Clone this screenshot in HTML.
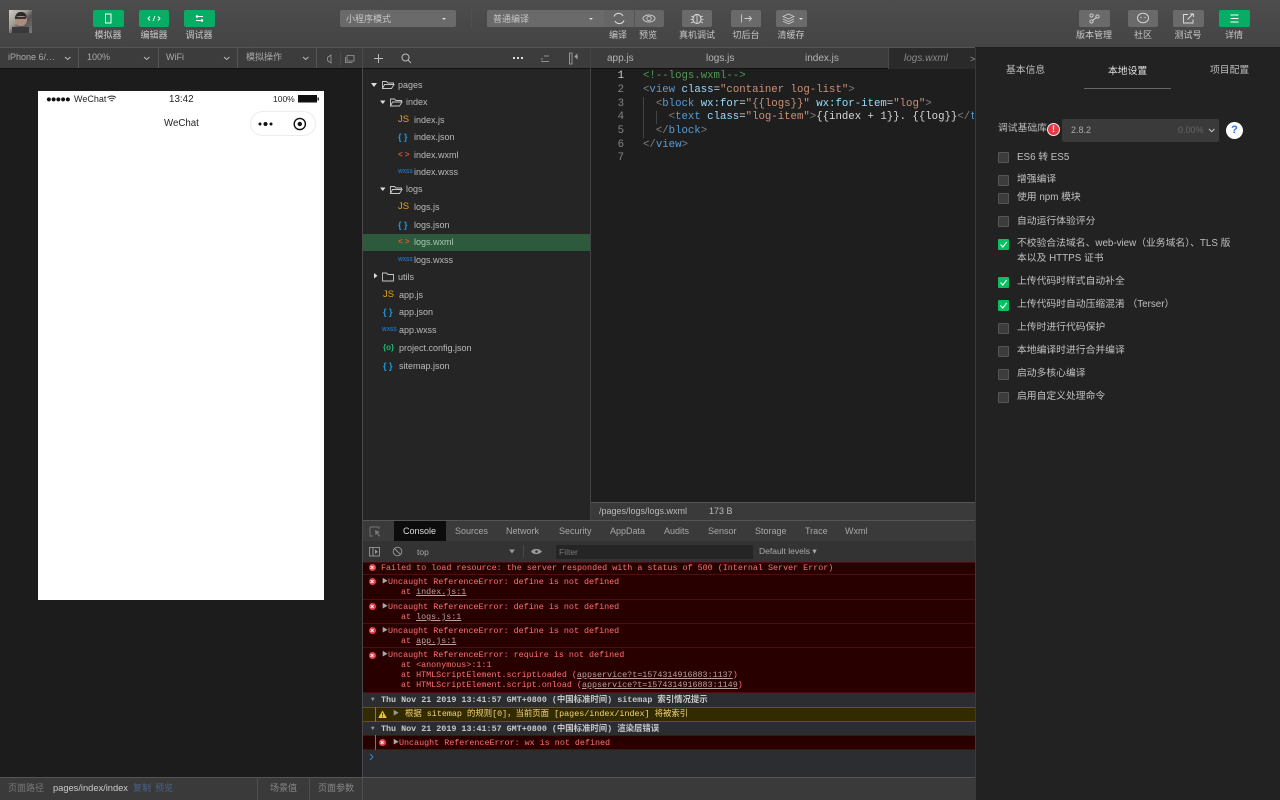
<!DOCTYPE html>
<html><head><meta charset="utf-8"><style>
*{box-sizing:border-box}
html,body{margin:0;padding:0;width:1280px;height:800px;overflow:hidden;background:#1e1e1e;font-family:"Liberation Sans","Noto Sans CJK SC",sans-serif;color:#ccc}
#w{position:absolute;left:0;top:0;width:1280px;height:800px;overflow:hidden;filter:blur(.35px)}
.a{position:absolute;white-space:nowrap}
.t{position:absolute;white-space:nowrap;line-height:14px;font-size:9px;color:#c0c0c0}
.btn{position:absolute;top:10px;height:17px;width:30px;background:#6a6a6a;border-radius:2px}
.g{background:#06ad64}
.lbl{position:absolute;top:29px;line-height:13px;font-size:9px;color:#c8c8c8;text-align:center;white-space:nowrap}
svg{position:absolute;overflow:visible}
.f{position:absolute;font-size:9px;line-height:14px;color:#bababa;white-space:nowrap}
.i{position:absolute;font-size:9.500px;line-height:14px;white-space:nowrap}
.m{position:absolute;font-family:"Liberation Mono","Noto Sans CJK SC",monospace;font-size:8.4px;line-height:10px;white-space:pre;color:#ff7070}
.m u{color:#b9a0a0}
.c{position:absolute;left:643px;font-family:"Liberation Mono",monospace;font-size:10.7px;line-height:14px;white-space:pre;color:#d8d8d8}
.n{position:absolute;left:612px;width:12px;text-align:right;font-family:"Liberation Mono",monospace;font-size:10.7px;line-height:14px;color:#858585}
.tg{color:#808080}.b{color:#569cd6}.s{color:#ce9178}.k{color:#9cdcfe}
.dt{position:absolute;font-size:9px;color:#a8a8a8;line-height:14px;top:524px;white-space:nowrap}
.cb{position:absolute;left:998px;width:11px;height:11px;background:#3c3c3c;border:1px solid #555;border-radius:1px}
.cb.on{background:#07c160;border-color:#07c160}
.l{position:absolute;left:1017px;font-size:9.800px;line-height:15px;color:#c0c0c0;white-space:nowrap}
.e{position:absolute;width:7px;height:7px;border-radius:50%;background:#e8404a}
.e:after,.e:before{content:"";position:absolute;left:1.300px;top:3px;width:4.400px;height:1px;background:#fff;transform:rotate(45deg)}
.e:before{transform:rotate(-45deg)}
.ln{position:absolute;left:363px;width:612px;height:1px;background:#4a1010}
</style></head><body><div id="w">

<!-- top toolbar -->
<div class="a" style="left:0;top:0;width:1280px;height:47px;background:linear-gradient(#4d4d4d,#444)"></div>
<div class="a" style="left:0;top:47px;width:975px;height:1px;background:#555"></div>

<div class="a" style="left:9px;top:10px;width:23px;height:23px;background:linear-gradient(135deg,#d0ccc3 0%,#a09a95 40%,#55524f 60%,#7a7a84 100%)"></div>
<div class="a" style="left:15px;top:12px;width:12px;height:14px;border-radius:45%;background:#a98f80;border-top:4px solid #2a2a2a"></div>
<div class="a" style="left:15px;top:17px;width:11px;height:2px;background:#333"></div>
<div class="a" style="left:12px;top:27px;width:17px;height:6px;background:#3a383a"></div>

<div class="btn g" style="left:93px;width:31px"></div>
<svg style="left:93px;top:10px" width="31" height="17"><rect x="12.500" y="4" width="5.500" height="9" fill="none" stroke="#fff" stroke-width="1"/></svg>
<div class="lbl" style="left:88px;width:40px">模拟器</div>
<div class="btn g" style="left:139px;width:30px"></div>
<svg style="left:139px;top:10px" width="30" height="17"><path d="M11 6.500 9 8.500l2 2M19 6.500l2 2-2 2M16 6l-2 5" fill="none" stroke="#fff" stroke-width=".9"/></svg>
<div class="lbl" style="left:134px;width:40px">编辑器</div>
<div class="btn g" style="left:184px;width:31px"></div>
<svg style="left:184px;top:10px" width="31" height="17"><path d="M12 6.500h7M12 6.500l1.500-1.500M12 6.500 13.500 8M19 10.500h-7M19 10.500l-1.500-1.500M19 10.500 17.500 12" fill="none" stroke="#fff" stroke-width=".9"/></svg>
<div class="lbl" style="left:179px;width:40px">调试器</div>

<div class="a" style="left:340px;top:10px;width:116px;height:17px;background:#6a6a6a;border-radius:2px"></div>
<div class="t" style="left:346px;top:12px;color:#c8c8c8">小程序模式</div>
<div class="a" style="left:442px;top:18px;border:2px solid transparent;border-top:2px solid #ddd"></div>
<div class="a" style="left:471px;top:10px;width:1px;height:17px;background:#505050"></div>

<div class="a" style="left:487px;top:10px;width:117px;height:17px;background:#6a6a6a;border-radius:2px 0 0 2px"></div>
<div class="t" style="left:493px;top:12px;color:#c8c8c8">普通编译</div>
<div class="a" style="left:589px;top:18px;border:2px solid transparent;border-top:2px solid #ddd"></div>
<div class="a" style="left:604px;top:10px;width:30px;height:17px;background:#666"></div>
<svg style="left:604px;top:10px" width="30" height="17"><path d="M10 6.500A5 5 0 0 1 19 6M20 10.500A5 5 0 0 1 11 11" fill="none" stroke="#ddd" stroke-width="1"/></svg>
<div class="a" style="left:634px;top:10px;width:30px;height:17px;background:#666;border-left:1px solid #555;border-radius:0 2px 2px 0"></div>
<svg style="left:634px;top:10px" width="30" height="17"><ellipse cx="15" cy="8.500" rx="6" ry="3.500" fill="none" stroke="#ccc" stroke-width=".9"/><circle cx="15" cy="8.500" r="2.200" fill="none" stroke="#ccc" stroke-width=".9"/></svg>
<div class="lbl" style="left:604px;width:28px">编译</div>
<div class="lbl" style="left:634px;width:28px">预览</div>
<div class="btn" style="left:682px"></div>
<svg style="left:682px;top:10px" width="30" height="17"><ellipse cx="15" cy="9" rx="4" ry="4.500" fill="none" stroke="#ddd"/><path d="M13 4.500h4M9 6l3 1.500M21 6l-3 1.500M8.500 9.500H11M21.500 9.500H19M9 13l3-1.500M21 13l-3-1.500M15 5v8" fill="none" stroke="#ddd" stroke-width=".8"/></svg>
<div class="lbl" style="left:672px;width:50px">真机调试</div>
<div class="btn" style="left:731px"></div>
<svg style="left:731px;top:10px" width="30" height="17"><path d="M10.500 4.500v8M13.500 8.500h7M18 6l2.500 2.500L18 11" fill="none" stroke="#ccc" stroke-width=".9"/></svg>
<div class="lbl" style="left:726px;width:40px">切后台</div>
<div class="btn" style="left:776px;width:31px"></div>
<svg style="left:776px;top:10px" width="31" height="17"><path d="M7 6.500l5.500-2.500L18 6.500l-5.500 2.500zM7 9l5.500 2.500L18 9M7 11.300l5.500 2.500 5.500-2.500" fill="none" stroke="#ccc" stroke-width=".8"/><path d="M23 8h4l-2 2z" fill="#ddd"/></svg>
<div class="lbl" style="left:771px;width:40px">清缓存</div>

<div class="btn" style="left:1079px;width:31px"></div>
<svg style="left:1079px;top:10px" width="31" height="17"><circle cx="12.500" cy="5.500" r="1.600" fill="none" stroke="#ddd" stroke-width=".8"/><circle cx="12.500" cy="11.500" r="1.600" fill="none" stroke="#ddd" stroke-width=".8"/><circle cx="18.500" cy="6.500" r="1.600" fill="none" stroke="#ddd" stroke-width=".8"/><path d="M13.500 10.500 17.500 7.500" stroke="#ddd" stroke-width=".8"/></svg>
<div class="lbl" style="left:1070px;width:48px">版本管理</div>
<div class="btn" style="left:1128px;width:30px"></div>
<svg style="left:1128px;top:10px" width="30" height="17"><ellipse cx="15" cy="8" rx="5.500" ry="4.800" fill="none" stroke="#ddd" stroke-width=".9"/><circle cx="13" cy="7.500" r=".6" fill="#ddd"/><circle cx="17" cy="7.500" r=".6" fill="#ddd"/></svg>
<div class="lbl" style="left:1123px;width:40px">社区</div>
<div class="btn" style="left:1173px;width:31px"></div>
<svg style="left:1173px;top:10px" width="31" height="17"><path d="M15 4.500h-4.500v8.500h9.500V9.500M14.500 9.500 20 4M17 4h3.500v3" fill="none" stroke="#ddd" stroke-width=".9"/></svg>
<div class="lbl" style="left:1168px;width:40px">测试号</div>
<div class="btn g" style="left:1219px;width:31px"></div>
<svg style="left:1219px;top:10px" width="31" height="17"><path d="M11.500 5h8M11.500 8.500h8M11.500 12h8" stroke="#fff" stroke-width=".9"/></svg>
<div class="lbl" style="left:1214px;width:40px">详情</div>

<!-- second bar -->
<div class="a" style="left:0;top:48px;width:975px;height:20px;background:#3c3c3c"></div>
<div class="a" style="left:0;top:68px;width:975px;height:1px;background:#111"></div>
<div class="t" style="left:8px;top:50px;color:#aaa">iPhone 6/…</div>
<div class="t" style="left:87px;top:50px;color:#aaa">100%</div>
<div class="t" style="left:166px;top:50px;color:#aaa">WiFi</div>
<div class="t" style="left:246px;top:50px;color:#aaa">模拟操作</div>
<svg style="left:0;top:48px" width="362" height="20" fill="none" stroke="#bbb" stroke-width="1">
<path d="M65 9l2.700 2.500L70.400 9M144 9l2.700 2.500L149.400 9M224 9l2.700 2.500L229.400 9M303 9l2.700 2.500L308.400 9"/>
<path d="M78.500 0v20M158.500 0v20M237.500 0v20M316.500 0v20" stroke="#555"/>
<path d="M340.500 5v12" stroke="#4c4c4c"/>
<path d="M331 7l-3.500 2.500v3l3.500 2.500z" stroke="#999" stroke-width=".8"/>
<path d="M347 7.500h7v5.500h-7zM345.500 9v5.500h7" stroke="#999" stroke-width=".8"/>
</svg>
<div class="a" style="left:362px;top:48px;width:1px;height:730px;background:#4a4a4a"></div>

<!-- simulator -->
<div class="a" style="left:0;top:69px;width:362px;height:708px;background:#1c1c1c"></div>
<div class="a" style="left:38px;top:91px;width:286px;height:509px;background:#fff"></div>
<div class="a" style="left:46px;top:95.500px;color:#111;font-size:9.500px;line-height:8px;letter-spacing:-1px">●●●●●</div>
<div class="t" style="left:74px;top:92px;color:#222;font-size:9px">WeChat</div>
<svg style="left:107px;top:95px" width="10" height="8" fill="none" stroke="#222" stroke-width=".9"><path d="M.5 2.500c2.500-2 6-2 8.500 0M2 4.200c1.700-1.300 4-1.300 5.500 0M3.500 6c.8-.6 1.700-.6 2.500 0"/></svg>
<div class="t" style="left:169px;top:92px;color:#222;font-size:9.800px;line-height:15px">13:42</div>
<div class="t" style="left:273px;top:92px;color:#222;font-size:8.500px">100%</div>
<svg style="left:298px;top:95px" width="21" height="8"><rect x=".5" y=".5" width="18" height="6.500" fill="#111" stroke="#111"/><rect x="19.500" y="2.500" width="1.300" height="3" fill="#111"/></svg>
<div class="t" style="left:164px;top:116px;color:#222;font-size:9.700px;line-height:15px">WeChat</div>
<div class="a" style="left:250px;top:111px;width:66px;height:25px;border:1px solid #ececec;border-radius:13px"></div>
<svg style="left:258px;top:118px" width="60" height="12"><circle cx="2" cy="6" r="1.500" fill="#111"/><circle cx="7.500" cy="6" r="2" fill="#111"/><circle cx="13" cy="6" r="1.500" fill="#111"/><circle cx="41.800" cy="6" r="5.600" fill="none" stroke="#111" stroke-width="1.400"/><circle cx="41.800" cy="6" r="2.200" fill="#111"/></svg>

<!-- tree toolbar -->
<svg style="left:363px;top:48px" width="228" height="20" fill="none" stroke="#bbb" stroke-width="1">
<path d="M11 10.500h9M15.500 6v9"/><circle cx="42.500" cy="9.500" r="3.500"/><path d="M45 12l3 3"/>
<path d="M178 11h2M181 8h5M178 13.500h8" stroke="#aaa" stroke-width=".8"/>
<path d="M206.500 5v11h2.500V5zM212 8.500l3 0M212 8.500l2-2v4z" stroke="#aaa" stroke-width=".8"/>
</svg>
<div class="a" style="left:513px;top:57px;width:2px;height:2px;background:#ddd;box-shadow:4px 0 #ddd,8px 0 #ddd"></div>
<div class="a" style="left:590px;top:48px;width:1px;height:472px;background:#444"></div>

<!-- file tree -->
<div class="a" style="left:363px;top:69px;width:227px;height:451px;background:#252526"></div>
<div class="a" style="left:363px;top:234px;width:227px;height:17px;background:#2d5a3d"></div>
<svg style="left:363px;top:70px" width="40" height="230" fill="#ddd">
<path d="M8 13h6l-3 4zM17 30.500h5.500l-2.700 3.500zM17 117.500h5.500l-2.700 3.500zM11 203v5.500l3.500-2.700z" fill="#ddd"/>
<g fill="none" stroke="#c8c8c8" stroke-width=".9">
<path d="M19.500 18.500v-7h4l1.500 1.500h5.500v2M19.500 18.500h9l2.500-4h-9.500z"/>
<path d="M27.500 36v-7h4l1.500 1.500h5.500v2M27.500 36h9l2.500-4h-9.500z"/>
<path d="M27.500 123.500v-7h4l1.500 1.500h5.500v2M27.500 123.500h9l2.500-4h-9.500z"/>
<path d="M19.500 211v-8h4l1.500 1.500h5.500v6.500z"/>
</g></svg>
<div class="f" style="left:398px;top:78px">pages</div>
<div class="f" style="left:406px;top:95px">index</div>
<div class="f" style="left:406px;top:182px">logs</div>
<div class="f" style="left:398px;top:270px">utils</div>

<div class="i" style="left:398px;top:113px;color:#e8a317">JS</div><div class="f" style="left:414px;top:113px">index.js</div>
<div class="i" style="left:398px;top:130px;color:#1b9ad6;font-weight:bold;font-size:9px">{ }</div><div class="f" style="left:414px;top:130px">index.json</div>
<div class="i" style="left:398px;top:148px;color:#d9582a;font-size:8px;font-weight:bold">&lt; &gt;</div><div class="f" style="left:414px;top:148px">index.wxml</div>
<div class="i" style="left:398px;top:165px;color:#1e6fbf;font-size:5px;font-weight:bold">WXSS</div><div class="f" style="left:414px;top:165px">index.wxss</div>
<div class="i" style="left:398px;top:200px;color:#e8a317">JS</div><div class="f" style="left:414px;top:200px">logs.js</div>
<div class="i" style="left:398px;top:218px;color:#1b9ad6;font-weight:bold;font-size:9px">{ }</div><div class="f" style="left:414px;top:218px">logs.json</div>
<div class="i" style="left:398px;top:235px;color:#d9582a;font-size:8px;font-weight:bold">&lt; &gt;</div><div class="f" style="left:414px;top:235px;color:#a8c8b0">logs.wxml</div>
<div class="i" style="left:398px;top:253px;color:#1e6fbf;font-size:5px;font-weight:bold">WXSS</div><div class="f" style="left:414px;top:253px">logs.wxss</div>
<div class="i" style="left:383px;top:288px;color:#e8a317">JS</div><div class="f" style="left:399px;top:288px">app.js</div>
<div class="i" style="left:383px;top:305px;color:#1b9ad6;font-weight:bold;font-size:9px">{ }</div><div class="f" style="left:399px;top:305px">app.json</div>
<div class="i" style="left:382px;top:323px;color:#1e6fbf;font-size:5px;font-weight:bold">WXSS</div><div class="f" style="left:399px;top:323px">app.wxss</div>
<div class="i" style="left:383px;top:341px;color:#1fb56d;font-size:8px;font-weight:bold">{o}</div><div class="f" style="left:399px;top:341px">project.config.json</div>
<div class="i" style="left:383px;top:359px;color:#1b9ad6;font-weight:bold;font-size:9px">{ }</div><div class="f" style="left:399px;top:359px">sitemap.json</div>

<!-- editor tabs -->
<div class="t" style="left:607px;top:52px;color:#b4b4b4;font-size:10px">app.js</div>
<div class="t" style="left:706px;top:52px;color:#b4b4b4;font-size:10px">logs.js</div>
<div class="t" style="left:805px;top:52px;color:#b4b4b4;font-size:10px">index.js</div>
<div class="a" style="left:888px;top:48px;width:87px;height:21px;background:#2a2a2a;border-left:1px solid #4a4a4a"></div>
<div class="t" style="left:904px;top:52px;color:#8a8a8a;font-style:italic;font-size:10px">logs.wxml</div>
<div class="t" style="left:970px;top:52px;color:#999;font-size:9px">&gt;</div>

<!-- editor -->
<div class="a" style="left:591px;top:69px;width:383px;height:433px;background:#1e1e1e;overflow:hidden"></div>
<div class="n" style="top:69px;color:#ccc">1</div><div class="n" style="top:83px">2</div><div class="n" style="top:97px">3</div><div class="n" style="top:110px">4</div><div class="n" style="top:124px">5</div><div class="n" style="top:138px">6</div><div class="n" style="top:151px">7</div>
<div class="a" style="left:643px;top:97px;width:1px;height:41px;background:#444"></div>
<div class="a" style="left:656px;top:111px;width:1px;height:13px;background:#444"></div>
<div class="c" style="top:69px;color:#529955">&lt;!--logs.wxml--&gt;</div>
<div class="c" style="top:83px"><span class="tg">&lt;</span><span class="b">view</span> <span class="k">class</span>=<span class="s">"container log-list"</span><span class="tg">&gt;</span></div>
<div class="c" style="top:97px">  <span class="tg">&lt;</span><span class="b">block</span> <span class="k">wx:for</span>=<span class="s">"{{logs}}"</span> <span class="k">wx:for-item</span>=<span class="s">"log"</span><span class="tg">&gt;</span></div>
<div class="a" style="left:643px;top:110px;width:331px;height:14px;overflow:hidden"><div class="c" style="left:0;top:0">    <span class="tg">&lt;</span><span class="b">text</span> <span class="k">class</span>=<span class="s">"log-item"</span><span class="tg">&gt;</span>{{index + 1}}. {{log}}<span class="tg">&lt;/</span><span class="b">text</span></div></div>
<div class="c" style="top:124px">  <span class="tg">&lt;/</span><span class="b">block</span><span class="tg">&gt;</span></div>
<div class="c" style="top:138px"><span class="tg">&lt;/</span><span class="b">view</span><span class="tg">&gt;</span></div>

<!-- status -->
<div class="a" style="left:591px;top:502px;width:384px;height:18px;background:#3a3a3a;border-top:1px solid #555"></div>
<div class="t" style="left:599px;top:504px;font-size:9px;color:#bbb">/pages/logs/logs.wxml</div>
<div class="t" style="left:709px;top:504px;font-size:9px;color:#bbb">173 B</div>

<!-- devtools -->
<div class="a" style="left:363px;top:520px;width:612px;height:1px;background:#555"></div>
<div class="a" style="left:363px;top:521px;width:612px;height:20px;background:#3a3a3a"></div>
<div class="a" style="left:394px;top:521px;width:52px;height:20px;background:#0c0c0c"></div>
<svg style="left:363px;top:521px" width="30" height="20" fill="none" stroke="#777" stroke-width=".9"><path d="M7 6h9v2M7 6v9h3"/><path d="M12 9l5 2-2 1 2 3-1 .7-2-3-1.500 1.500z" fill="#777" stroke="none"/></svg>
<div class="dt" style="left:403px;color:#ddd">Console</div>
<div class="dt" style="left:455px">Sources</div>
<div class="dt" style="left:506px">Network</div>
<div class="dt" style="left:559px">Security</div>
<div class="dt" style="left:610px">AppData</div>
<div class="dt" style="left:664px">Audits</div>
<div class="dt" style="left:708px">Sensor</div>
<div class="dt" style="left:755px">Storage</div>
<div class="dt" style="left:805px">Trace</div>
<div class="dt" style="left:845px">Wxml</div>

<div class="a" style="left:363px;top:541px;width:612px;height:21px;background:#333"></div>
<svg style="left:363px;top:541px" width="190" height="21" fill="none" stroke="#999" stroke-width=".9">
<rect x="6.500" y="6.500" width="10" height="8.500"/><path d="M10 6.500v8.500"/><path d="M12 8.500l3 2.200-3 2.200z" fill="#999" stroke="none"/>
<circle cx="34.500" cy="10.500" r="4.300"/><path d="M31.500 7.500l6 6"/>
<path d="M146 8.500h6l-3 4z" fill="#999" stroke="none"/>
<path d="M168 10.500c2-3.500 8-3.500 11 0c-3 3.500-9 3.500-11 0z" fill="#999" stroke="none"/><circle cx="173.500" cy="10.500" r="1.300" fill="#333" stroke="none"/>
</svg>
<div class="t" style="left:417px;top:545px;color:#aaa;font-size:8.500px">top</div>
<div class="a" style="left:523px;top:545px;width:1px;height:13px;background:#484848"></div>
<div class="a" style="left:556px;top:545px;width:197px;height:14px;background:#252525"></div>
<div class="t" style="left:559px;top:545px;color:#777;font-size:8.500px">Filter</div>
<div class="t" style="left:759px;top:544px;color:#aaa;font-size:8.500px">Default levels ▾</div>

<!-- console messages -->
<div class="a" style="left:363px;top:562px;width:612px;height:131px;background:#290000"></div>
<div class="ln" style="top:562px"></div><div class="ln" style="top:574px"></div><div class="ln" style="top:599px"></div><div class="ln" style="top:623px"></div><div class="ln" style="top:647px"></div><div class="ln" style="top:692px"></div>
<div class="e" style="left:369px;top:564px"></div>
<div class="m" style="left:381px;top:563px">Failed to load resource: the server responded with a status of 500 (Internal Server Error)</div>
<div class="e" style="left:369px;top:578px"></div>
<div class="m" style="left:382px;top:577px;color:#aaa;font-size:6px">▶</div>
<div class="m" style="left:388px;top:577px">Uncaught ReferenceError: define is not defined</div>
<div class="m" style="left:401px;top:587px">at <u>index.js:1</u></div>
<div class="e" style="left:369px;top:603px"></div>
<div class="m" style="left:382px;top:602px;color:#aaa;font-size:6px">▶</div>
<div class="m" style="left:388px;top:602px">Uncaught ReferenceError: define is not defined</div>
<div class="m" style="left:401px;top:612px">at <u>logs.js:1</u></div>
<div class="e" style="left:369px;top:627px"></div>
<div class="m" style="left:382px;top:626px;color:#aaa;font-size:6px">▶</div>
<div class="m" style="left:388px;top:626px">Uncaught ReferenceError: define is not defined</div>
<div class="m" style="left:401px;top:636px">at <u>app.js:1</u></div>
<div class="e" style="left:369px;top:652px"></div>
<div class="m" style="left:382px;top:650px;color:#aaa;font-size:6px">▶</div>
<div class="m" style="left:388px;top:650px">Uncaught ReferenceError: require is not defined</div>
<div class="m" style="left:401px;top:660px">at &lt;anonymous&gt;:1:1</div>
<div class="m" style="left:401px;top:670px">at HTMLScriptElement.scriptLoaded (<u>appservice?t=1574314916883:1137</u>)</div>
<div class="m" style="left:401px;top:680px">at HTMLScriptElement.script.onload (<u>appservice?t=1574314916883:1149</u>)</div>

<div class="a" style="left:363px;top:693px;width:612px;height:85px;background:#2b2d30"></div>
<div class="m" style="left:371px;top:695px;color:#999;font-size:6px">▼</div>
<div class="m" style="left:381px;top:695px;color:#c8c8c8;font-weight:bold">Thu Nov 21 2019 13:41:57 GMT+0800 (中国标准时间) sitemap 索引情况提示</div>
<div class="a" style="left:363px;top:707px;width:612px;height:15px;background:#332b00;border-top:1px solid #665500;border-bottom:1px solid #665500"></div>
<div class="a" style="left:375px;top:707px;width:1px;height:15px;background:#777"></div>
<svg style="left:378px;top:710px" width="9" height="9"><path d="M4.500 .5 8.800 8H.2z" fill="#f5c518"/><path d="M4.500 3v2.500M4.500 6.200v1" stroke="#333" stroke-width=".9"/></svg>
<div class="m" style="left:393px;top:709px;color:#999;font-size:6px">▶</div>
<div class="m" style="left:405px;top:709px;color:#f5d67b">根据 sitemap 的规则[0]，当前页面 [pages/index/index] 将被索引</div>
<div class="m" style="left:371px;top:724px;color:#999;font-size:6px">▼</div>
<div class="m" style="left:381px;top:724px;color:#c8c8c8;font-weight:bold">Thu Nov 21 2019 13:41:57 GMT+0800 (中国标准时间) 渲染层错误</div>
<div class="a" style="left:363px;top:735px;width:612px;height:15px;background:#290000;border-top:1px solid #4a1010;border-bottom:1px solid #4a1010"></div>
<div class="a" style="left:375px;top:735px;width:1px;height:15px;background:#777"></div>
<div class="e" style="left:379px;top:739px"></div>
<div class="m" style="left:393px;top:738px;color:#aaa;font-size:6px">▶</div>
<div class="m" style="left:399px;top:738px">Uncaught ReferenceError: wx is not defined</div>
<svg style="left:369px;top:753px" width="6" height="8"><path d="M1 1l3 3-3 3" fill="none" stroke="#3a7bd5" stroke-width="1.100"/></svg>

<!-- bottom bar -->
<div class="a" style="left:0;top:777px;width:975px;height:23px;background:#3a3a3a;border-top:1px solid #555"></div>
<div class="t" style="left:8px;top:781px;color:#777">页面路径</div>
<div class="t" style="left:53px;top:781px;color:#ccc;font-size:9.300px">pages/index/index</div>
<div class="t" style="left:133px;top:781px;color:#48618a">复制</div>
<div class="t" style="left:155px;top:781px;color:#48618a">预览</div>
<div class="a" style="left:257px;top:778px;width:1px;height:22px;background:#4e4e4e"></div>
<div class="t" style="left:270px;top:781px;color:#888">场景值</div>
<div class="a" style="left:309px;top:778px;width:1px;height:22px;background:#4e4e4e"></div>
<div class="t" style="left:318px;top:781px;color:#888">页面参数</div>
<div class="a" style="left:362px;top:778px;width:1px;height:22px;background:#4e4e4e"></div>

<!-- right panel -->
<div class="a" style="left:975px;top:48px;width:305px;height:752px;background:#222;border-left:1px solid #3a3a3a"></div>
<div class="t" style="left:1006px;top:64px;font-size:9.800px;color:#bcbcbc">基本信息</div>
<div class="t" style="left:1108px;top:65px;font-size:9.800px;color:#e0e0e0">本地设置</div>
<div class="t" style="left:1210px;top:64px;font-size:9.800px;color:#bcbcbc">项目配置</div>
<div class="a" style="left:1084px;top:88px;width:87px;height:1px;background:#666"></div>
<div class="t" style="left:998px;top:122px;font-size:9.800px;color:#bbb">调试基础库</div>
<div class="a" style="left:1047px;top:123px;width:13px;height:13px;border-radius:50%;background:#e83a45;border:1px solid #eee;color:#fff;font-size:9px;font-weight:bold;line-height:11px;text-align:center">!</div>
<div class="a" style="left:1062px;top:119px;width:157px;height:23px;background:#3a3a3a;border-radius:2px"></div>
<div class="t" style="left:1071px;top:123px;font-size:9px;color:#aaa">2.8.2</div>
<div class="t" style="left:1178px;top:123px;font-size:9px;color:#666">0.00%</div>
<svg style="left:1208px;top:128px" width="8" height="6"><path d="M1 1l2.700 2.700L6.400 1" fill="none" stroke="#ccc" stroke-width="1"/></svg>
<div class="a" style="left:1226px;top:122px;width:17px;height:17px;border-radius:50%;background:#fff;color:#2a6fe0;font-size:11px;font-weight:bold;line-height:17px;text-align:center">?</div>

<div class="cb" style="top:152px"></div><div class="l" style="top:150px">ES6 转 ES5</div>
<div class="cb" style="top:175px"></div><div class="l" style="top:172px">增强编译</div>
<div class="cb" style="top:193px"></div><div class="l" style="top:190px">使用 npm 模块</div>
<div class="cb" style="top:216px"></div><div class="l" style="top:214px">自动运行体验评分</div>
<div class="cb on" style="top:239px"></div><div class="l" style="top:236px">不校验合法域名、web-view（业务域名）、TLS 版</div><div class="l" style="top:251px">本以及 HTTPS 证书</div>
<div class="cb on" style="top:277px"></div><div class="l" style="top:274px">上传代码时样式自动补全</div>
<div class="cb on" style="top:300px"></div><div class="l" style="top:297px">上传代码时自动压缩混淆 （Terser）</div>
<div class="cb" style="top:323px"></div><div class="l" style="top:320px">上传时进行代码保护</div>
<div class="cb" style="top:346px"></div><div class="l" style="top:343px">本地编译时进行合并编译</div>
<div class="cb" style="top:369px"></div><div class="l" style="top:366px">启动多核心编译</div>
<div class="cb" style="top:392px"></div><div class="l" style="top:389px">启用自定义处理命令</div>
<svg style="left:998px;top:239px" width="11" height="11"><path d="M2.500 5.500 4.800 8l3.900-5" fill="none" stroke="#fff" stroke-width="1.100"/></svg>
<svg style="left:998px;top:277px" width="11" height="11"><path d="M2.500 5.500 4.800 8l3.900-5" fill="none" stroke="#fff" stroke-width="1.100"/></svg>
<svg style="left:998px;top:300px" width="11" height="11"><path d="M2.500 5.500 4.800 8l3.900-5" fill="none" stroke="#fff" stroke-width="1.100"/></svg>

</div></body></html>
